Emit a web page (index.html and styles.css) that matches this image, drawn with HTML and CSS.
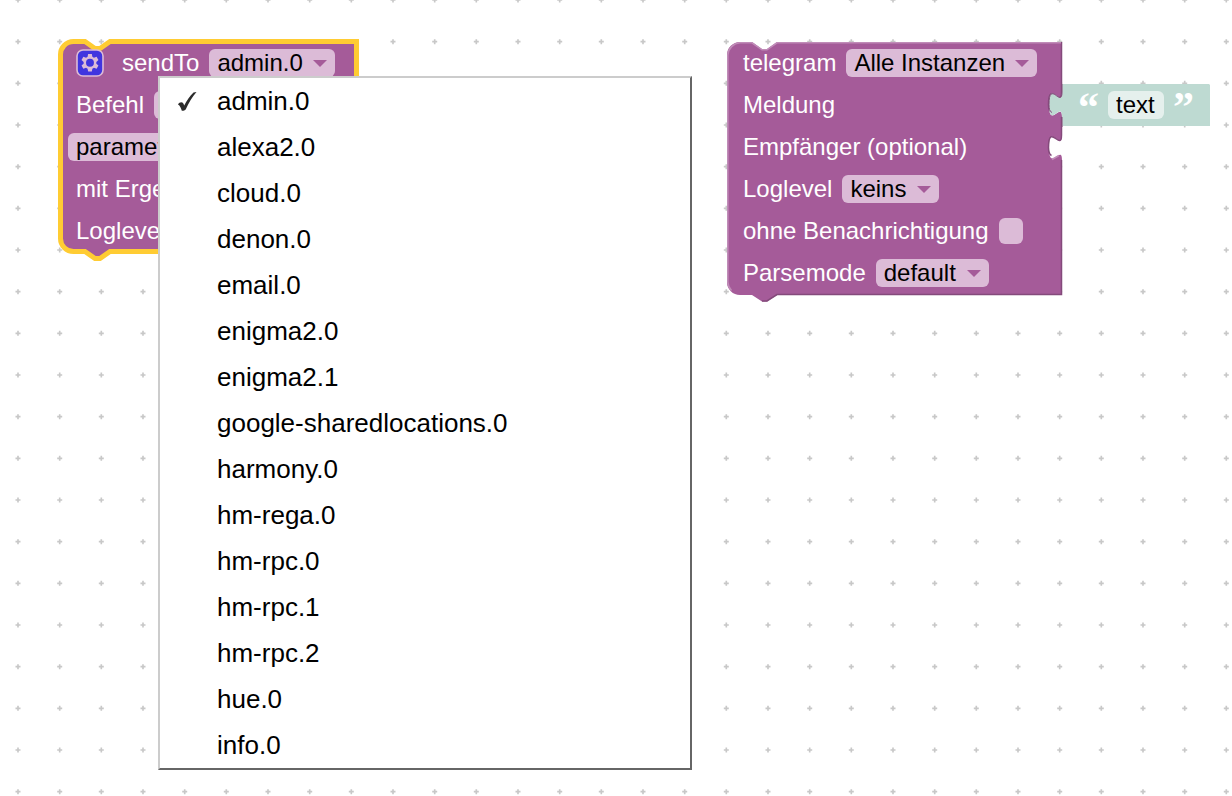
FILE: index.html
```html
<!DOCTYPE html>
<html lang="de">
<head>
<meta charset="utf-8">
<meta name="viewport" content="width=device-width, initial-scale=1">
<title>Blockly</title>
<link rel="stylesheet" href="styles.css">
</head>
<body>
<main class="workspace">
  <svg class="grid" aria-hidden="true">
    <defs>
      <pattern id="crosses" x="-3" y="-21" width="125" height="125" patternUnits="userSpaceOnUse">
        <path d="M18.5 21h5M60.2 21h5M101.8 21h5M18.5 62.7h5M60.2 62.7h5M101.8 62.7h5M18.5 104.3h5M60.2 104.3h5M101.8 104.3h5M21 18.5v5M62.7 18.5v5M104.3 18.5v5M21 60.2v5M62.7 60.2v5M104.3 60.2v5M21 101.8v5M62.7 101.8v5M104.3 101.8v5" stroke="#c8c8c8" stroke-width="1.67"/>
      </pattern>
    </defs>
    <rect width="100%" height="100%" fill="url(#crosses)"/>
  </svg>

  <section class="block block-sendto" aria-label="sendTo">
    <svg class="shape" aria-hidden="true">
      <path d="M.5 13A13 13 0 0 1 13.5-.5H25l10 7h5l10-7H296.500V209.500H50l-10 7h-5l-10-7H13.500A13 13 0 0 1 .5 196.500Z" fill="#a55b99" stroke="#fc3" stroke-width="5"/>
    </svg>
    <div class="row">
      <button class="gear" type="button" aria-label="Einstellungen">
        <svg viewBox="0 0 28 28" aria-hidden="true">
          <rect x="1" y="1" width="26" height="26" rx="6" fill="#4035df" stroke="#dcbbd7" stroke-width="1.6"/>
          <path d="M12 5.500h4l.6 3 1.700 1 2.900-1 2 3.500-2.300 2v2l2.300 2-2 3.400-2.900-1-1.700 1-.6 3h-4l-.6-3-1.700-1-2.900 1-2-3.400 2.300-2v-2l-2.300-2 2-3.500 2.900 1 1.700-1ZM14 10.700a4.300 4.300 0 1 0 0 8.600 4.300 4.300 0 0 0 0-8.600Z" fill="#dcbbd7" fill-rule="evenodd" transform="translate(1.100 0) scale(.92)"/>
        </svg>
      </button>
      <span id="sendto-label">sendTo</span>
      <span class="dropdown"><button class="field" type="button" aria-haspopup="listbox" aria-expanded="true" aria-controls="instances">admin.0</button></span>
    </div>
    <div class="row">
      <label for="command">Befehl</label>
      <input class="field text-field" id="command" type="text" value="send">
    </div>
    <div class="row row-field">
      <input class="field text-field param-field" type="text" value="parameter" aria-label="Parameter">
    </div>
    <div class="row"><span>mit Ergebnis</span></div>
    <div class="row"><span>Loglevel</span></div>
  </section>

  <section class="block block-telegram" aria-label="telegram">
    <svg class="shape" aria-hidden="true">
      <path d="M0 13A13 13 0 0 1 13 0H25l10 7h5l10-7H335V50c0 17-13-13-13 12.500s13-4 13 12.500V93c0 17-13-13-13 12.500s13-4 13 12.500V253H50l-10 6.500h-5L25 253H13A13 13 0 0 1 0 240Z" fill="#a55b99"/>
      <path d="M334.500 75V93c0 17-13-13-13 12.500 0 5 1 7 3 8M334.500 118V252.500H50l-10 6.500h-5M334.500 0V50c0 17-13-13-13 12.500 0 5 1 7 3 8" fill="none" stroke="#844a7b" stroke-width="1.500"/>
      <path d="M4.500 248.500A13 13 0 0 1 .8 240V13A13 13 0 0 1 13 .8H25l10 7h5l10-7H334M325 117.500l7-4" fill="none" stroke="#c08cb8" stroke-width="1.600"/>
    </svg>
    <div class="row">
      <label for="instance">telegram</label>
      <span class="dropdown"><select class="field" id="instance"><option>Alle Instanzen</option></select></span>
    </div>
    <div class="row"><span>Meldung</span></div>
    <div class="row"><span>Empfänger (optional)</span></div>
    <div class="row">
      <label for="loglevel">Loglevel</label>
      <span class="dropdown"><select class="field" id="loglevel"><option>keins</option></select></span>
    </div>
    <div class="row">
      <label for="silent">ohne Benachrichtigung</label>
      <input class="check" id="silent" type="checkbox">
    </div>
    <div class="row">
      <label for="parsemode">Parsemode</label>
      <span class="dropdown"><select class="field" id="parsemode"><option>default</option></select></span>
    </div>
  </section>

  <section class="block block-text" aria-label="Text">
    <svg class="shape" aria-hidden="true">
      <path d="M0 0H147l1 1V42H0V33c0-17-13 13-13-12.500S0 24.500 0 8Z" fill="#bedad2"/>
      <path d="M0 8c0 17-13-13-13 12.500 0 4 .5 7 3 8M0 8V0M0 33v10" fill="none" stroke="#844a7b" stroke-width="1"/>
    </svg>
    <span class="quote">“</span>
    <input class="field literal" type="text" value="text" aria-label="Textwert">
    <span class="quote">”</span>
  </section>

  <ul class="menu" id="instances" role="listbox" aria-labelledby="sendto-label">
    <li class="item" role="option" aria-selected="true">
      <svg class="tick" viewBox="0 0 20 22" aria-hidden="true"><path d="M1 13.500C2 11.500 4.500 10.500 5.800 11.800c.7.8 1 1.800 1.400 2.700C9.500 10 13 4.500 16.500 1.500l3-.5C15.500 5.500 11.500 12 8.700 18.500c-1 1-2.700 1.500-3.900 1.200C4.200 17.500 3 14.500 1 13.500Z" fill="#2b2b2b"/></svg>
      admin.0</li>
    <li class="item" role="option">alexa2.0</li>
    <li class="item" role="option">cloud.0</li>
    <li class="item" role="option">denon.0</li>
    <li class="item" role="option">email.0</li>
    <li class="item" role="option">enigma2.0</li>
    <li class="item" role="option">enigma2.1</li>
    <li class="item" role="option">google-sharedlocations.0</li>
    <li class="item" role="option">harmony.0</li>
    <li class="item" role="option">hm-rega.0</li>
    <li class="item" role="option">hm-rpc.0</li>
    <li class="item" role="option">hm-rpc.1</li>
    <li class="item" role="option">hm-rpc.2</li>
    <li class="item" role="option">hue.0</li>
    <li class="item" role="option">info.0</li>
  </ul>
</main>
</body>
</html>
```
FILE: styles.css
```css
* { box-sizing: border-box; }

body {
  margin: 0;
  background: #fff;
  font-family: "Liberation Sans", Arial, sans-serif;
}

.workspace {
  position: relative;
  min-height: 100vh;
  overflow: hidden;
}

.grid {
  position: absolute;
  inset: 0;
  width: 100%;
  height: 100%;
}

/* Blocks are placed freely on the canvas. */
.block {
  position: absolute;
  color: #fff;
  font-size: 24px;
  line-height: 28px;
  white-space: nowrap;
}

.block-sendto { left: 60px; top: 42px; width: 297px; }
.block-telegram { left: 727px; top: 42px; width: 335px; }

.block-text {
  left: 1062px;
  top: 84px;
  width: 148px;
  height: 42px;
  padding: 0 16px;
  display: flex;
  align-items: center;
  justify-content: space-between;
}

.shape {
  position: absolute;
  inset: 0;
  width: 100%;
  height: 100%;
  overflow: visible;
}

.row {
  position: relative;
  display: flex;
  align-items: center;
  gap: 10px;
  height: 42px;
  padding-left: 16px;
}

.row-field { padding-left: 8px; }

.field {
  display: block;
  height: 28px;
  margin: 0;
  padding: 0 8px;
  border: 0;
  border-radius: 6px;
  background: #dcbbd7;
  color: #000;
  font: inherit;
  appearance: none;
}

.dropdown { position: relative; }
.dropdown .field { padding-right: 32px; }

.dropdown::after {
  content: "";
  position: absolute;
  right: 8px;
  top: 11px;
  border: 7px solid transparent;
  border-top-color: #a55b99;
  border-bottom: 0;
  pointer-events: none;
}

.text-field { width: 90px; }
.param-field { width: 130px; }

.gear {
  width: 28px;
  height: 28px;
  margin-right: 8px;
  padding: 0;
  border: 0;
  background: none;
}

.gear svg { display: block; }

.check {
  width: 24px;
  height: 26px;
  margin: 0;
  border-radius: 6px;
  background: #dcbbd7;
  appearance: none;
}

.literal {
  position: relative;
  width: 56px;
  background: #e5f0ed;
}

.quote {
  position: relative;
  height: 28px;
  font: bold 42px/32px "Liberation Serif", serif;
}

.menu {
  position: absolute;
  left: 158px;
  top: 76px;
  width: 534px;
  margin: 0;
  padding: 0;
  border: 2px solid;
  border-color: #ccc #666 #666 #ccc;
  background: #fff;
  color: #000;
  font-size: 26px;
  line-height: 46px;
  list-style: none;
}

.item {
  position: relative;
  padding-left: 57px;
}

.tick {
  position: absolute;
  left: 17px;
  top: 13px;
  width: 20px;
  height: 22px;
}
```
